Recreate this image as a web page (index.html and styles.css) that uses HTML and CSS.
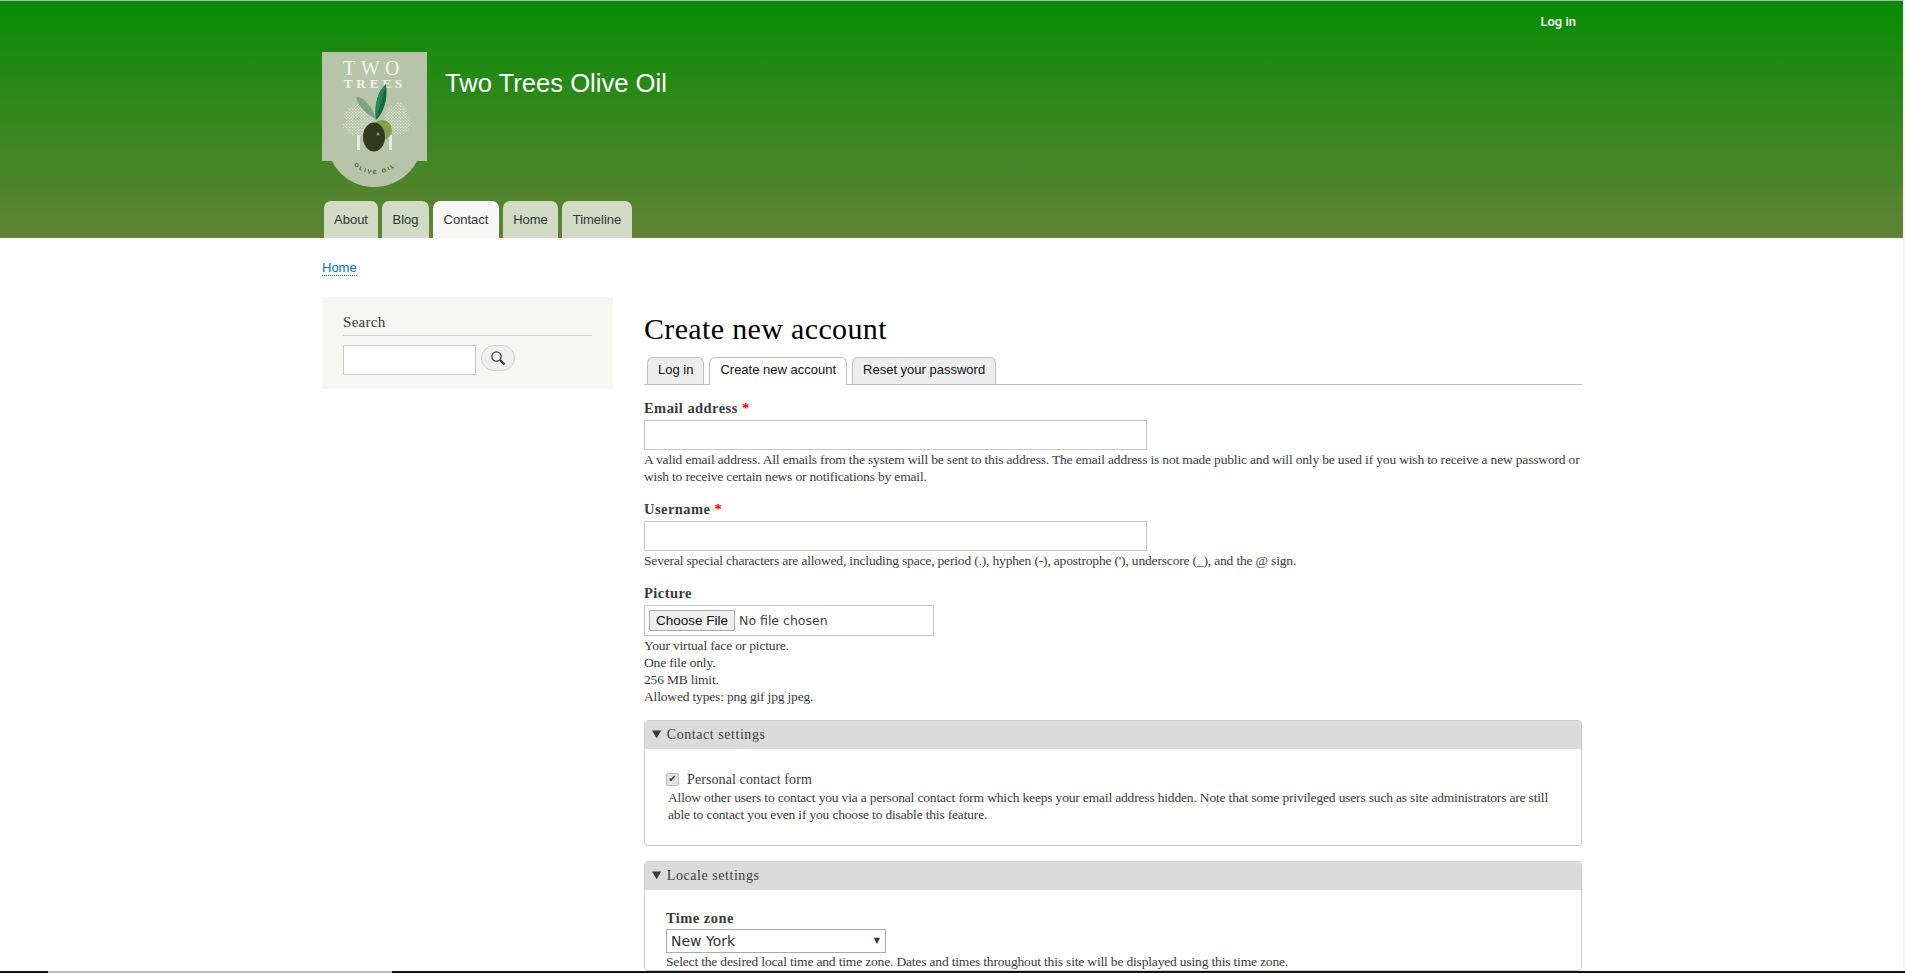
FILE: index.html
```html
<!DOCTYPE html>
<html lang="en">

<head>
    <meta charset="UTF-8">
    <meta name="viewport" content="width=device-width, initial-scale=1.0">
    <title>Create new account | Two Trees Olive Oil</title>
    <link rel="stylesheet" href="styles.css">
</head>

<body>
    <div class="page">
        <header class="site_header">
            <div class="wrap">
                <div class="secondary_menu"><a href="#">Log in</a></div>
                <div class="branding">
                    <a href="#" class="logo" aria-label="Home">
                        <svg width="105" height="135" viewBox="0 0 105 135">
                            <defs>
                                <pattern id="dots" width="3" height="3" patternUnits="userSpaceOnUse">
                                    <circle cx="0.7" cy="0.7" r="0.65" fill="#eceee4"/>
                                    <circle cx="2.2" cy="2.2" r="0.55" fill="#eceee4"/>
                                </pattern>
                            </defs>
                            <path d="M0 0H105V109H95C87 125 70 135 52 135C34 135 18 125 10 109H0Z" fill="#b8c4aa"/>
                            <text x="52" y="23" class="logo_two" text-anchor="middle">TWO</text>
                            <text x="53" y="36" class="logo_trees" text-anchor="middle">TREES</text>
                            <g class="logo_crown">
                                <path d="M34 51L41 53L46 59L53 64V84L38 85L27 83L20 74L23 68L22 61L27 55Z"/>
                                <path d="M62 60L70 53L78 50L85 56L86 64L90 72L86 80L76 84L62 82Z"/>
                            </g>
                            <rect x="35" y="83" width="3" height="15" fill="#e8eadf"/>
                            <rect x="67" y="83" width="3" height="15" fill="#e8eadf"/>
                            <path d="M34 45C41 44 50 54 54 67C45 63 36 54 34 45Z" fill="#7fa282"/>
                            <path d="M64 32C56 39 52 52 54 68C62 60 66 48 64 32Z" fill="#0f6b3c"/>
                            <path d="M64 32C56 39 52 52 54 68L60 46Z" fill="#2a8557"/>
                            <circle cx="60" cy="78" r="10" fill="#7fa04c"/>
                            <ellipse cx="52" cy="85" rx="11" ry="14.5" fill="#32391c"/>
                            <circle cx="56" cy="82" r="1.5" fill="#8b9180"/>
                            <path id="logo_curve" d="M24 106Q53 138 82 106" fill="none"/>
                            <text class="logo_oil"><textPath href="#logo_curve" startOffset="50%" text-anchor="middle">OLIVE OIL</textPath></text>
                        </svg>
                    </a>
                    <a href="#" class="site_name">Two Trees Olive Oil</a>
                </div>
                <nav class="primary_menu">
                    <a href="#" class="menu_about">About</a>
                    <a href="#" class="menu_blog">Blog</a>
                    <a href="#" class="menu_contact menu_checked">Contact</a>
                    <a href="#" class="menu_home">Home</a>
                    <a href="#" class="menu_timeline">Timeline</a>
                </nav>
            </div>
        </header>

        <div class="wrap">
            <div class="breadcrumb"><a href="#">Home</a></div>
            <div class="columns">
                <aside class="sidebar">
                    <section class="block">
                        <h2>Search</h2>
                        <form action="#" class="search_form">
                            <input type="search" aria-label="Search">
                            <button type="button" class="search_btn" aria-label="Search">
                                <svg width="16" height="16" viewBox="0 0 16 16" fill="none" stroke="#444">
                                    <circle cx="6.5" cy="6.5" r="4.6" stroke-width="1.4" fill="#f6f6f6"/>
                                    <path d="M10 10L14.5 14.5" stroke-width="2.4"/>
                                </svg>
                            </button>
                        </form>
                    </section>
                </aside>

                <main class="content">
                    <h1>Create new account</h1>
                    <ul class="tabs">
                        <li><a href="#">Log in</a></li>
                        <li class="tab_checked"><a href="#">Create new account</a></li>
                        <li><a href="#">Reset your password</a></li>
                    </ul>
                    <form action="#" class="account_form">
                        <div class="field">
                            <label for="mail">Email address <span class="required">*</span></label>
                            <input type="text" id="mail" class="text_input">
                            <div class="description">A valid email address. All emails from the system will be sent to this address. The email address is not made public and will only be used if you wish to receive a new password or wish to receive certain news or notifications by email.</div>
                        </div>
                        <div class="field">
                            <label for="user">Username <span class="required">*</span></label>
                            <input type="text" id="user" class="text_input">
                            <div class="description">Several special characters are allowed, including space, period (.), hyphen (-), apostrophe ('), underscore (_), and the @ sign.</div>
                        </div>
                        <div class="field">
                            <label for="picture">Picture</label>
                            <input type="file" id="picture" class="file_input">
                            <div class="description">Your virtual face or picture.<br>One file only.<br>256 MB limit.<br>Allowed types: png gif jpg jpeg.</div>
                        </div>
                        <details class="settings settings_contact" open>
                            <summary>Contact settings</summary>
                            <div class="settings_body">
                                <div class="check_row">
                                    <input type="checkbox" id="contact" checked>
                                    <label for="contact">Personal contact form</label>
                                </div>
                                <div class="description">Allow other users to contact you via a personal contact form which keeps your email address hidden. Note that some privileged users such as site administrators are still able to contact you even if you choose to disable this feature.</div>
                            </div>
                        </details>
                        <details class="settings" open>
                            <summary>Locale settings</summary>
                            <div class="settings_body settings_locale">
                                <label for="zone" class="zone_label">Time zone</label>
                                <div class="zone_box">
                                    <select id="zone" class="zone_select">
                                        <option>New York</option>
                                    </select>
                                </div>
                                <div class="description">Select the desired local time and time zone. Dates and times throughout this site will be displayed using this time zone.</div>
                            </div>
                        </details>
                    </form>
                </main>
            </div>
        </div>
    </div>
    <div class="bottom_strip"><span class="strip_gap"></span></div>
</body>

</html>
```

FILE: styles.css
```css
* {
    margin: 0;
    padding: 0;
    box-sizing: border-box;
}

html, body {
    height: 100%;
    overflow: hidden;
}

body {
    background-color: #f1f1f1;
    font: 13.5px/17px "Liberation Serif", serif;
    color: #3b3b3b;
}

a {
    text-decoration: none;
}

.page {
    width: 1903px;
    height: 973px;
    overflow: hidden;
    background-color: #fff;
}

.wrap {
    width: 1260px;
    margin-left: 322px;
}


/* header */

.site_header {
    height: 238px;
    border-top: 1px solid #b5b5b5;
    background: linear-gradient(#088c04, #628237);
}

.secondary_menu {
    height: 51px;
    padding: 12px 6px 0 0;
    text-align: right;
    font: 500 13px/17px "Roboto", "Liberation Sans", sans-serif;
}

.secondary_menu a {
    color: #fff;
}

.branding {
    display: flex;
    height: 149px;
}

.logo {
    display: block;
    width: 105px;
    height: 135px;
}

.logo_two {
    font: 20px "Liberation Serif", serif;
    letter-spacing: 5.5px;
    fill: #f2f3ea;
}

.logo_trees {
    font: bold 13px "Liberation Serif", serif;
    letter-spacing: 4px;
    fill: #f2f3ea;
}

.logo_crown {
    fill: url(#dots);
    stroke: #b8c4aa;
    stroke-width: 3;
    stroke-dasharray: 2 1.5;
}

.logo_oil {
    font: bold 5.5px "Liberation Sans", sans-serif;
    letter-spacing: 2.2px;
    fill: #3d5a28;
}

.site_name {
    margin: 15px 0 0 18px;
    font: 25.6px/32px "Liberation Sans", sans-serif;
    color: #fff;
}

.primary_menu {
    display: flex;
    gap: 4px;
    height: 37px;
    padding-left: 2px;
}

.primary_menu a {
    padding-top: 10px;
    text-align: center;
    font: 13px/17px "Liberation Sans", sans-serif;
    color: #333;
    background-color: #d1dbc6;
    border-radius: 7px 7px 0 0;
}

.primary_menu .menu_checked {
    background-color: #f7f8f5;
}

.menu_about {
    width: 54px;
}

.menu_blog {
    width: 47px;
}

.menu_contact {
    width: 66px;
}

.menu_home {
    width: 55px;
}

.menu_timeline {
    width: 70px;
}


/* body columns */

.breadcrumb {
    height: 59px;
    padding-top: 21px;
    font: 13px/17px "Liberation Sans", sans-serif;
}

.breadcrumb a {
    color: #0071b3;
    border-bottom: 1px dotted #0071b3;
}

.columns {
    display: flex;
    gap: 31px;
    align-items: flex-start;
}

.sidebar {
    width: 291px;
    flex-shrink: 0;
}

.block {
    height: 92px;
    padding: 17px 21px 0;
    background-color: #f6f6f2;
}

.block h2 {
    height: 22px;
    border-bottom: 1px solid #d6d6d6;
    font: 15px/17px "Liberation Serif", serif;
    font-weight: normal;
    letter-spacing: 0.3px;
}

.search_form {
    display: flex;
    gap: 5px;
    margin-top: 9px;
    align-items: flex-start;
}

.search_form input {
    width: 133px;
    height: 30px;
    border: 1px solid #c8c8c8;
    background-color: #fff;
}

.search_btn {
    display: flex;
    align-items: center;
    justify-content: center;
    width: 34px;
    height: 26px;
    border: 1px solid #d0d0d0;
    border-radius: 13px;
    background-color: #efefef;
}

.content {
    width: 938px;
}

h1 {
    height: 60px;
    padding-top: 14px;
    font: normal 30px/36px "Liberation Serif", serif;
    letter-spacing: 0.35px;
    color: #000;
}

.tabs {
    display: flex;
    gap: 5px;
    height: 28px;
    padding-left: 3px;
    border-bottom: 1px solid #bfbfbf;
    list-style: none;
}

.tabs li {
    height: 27px;
    padding: 3px 10px 0;
    border: 1px solid #bfbfbf;
    border-bottom: 0;
    border-radius: 6px 6px 0 0;
    background-color: #ededed;
    font: 13px/17px "Liberation Sans", sans-serif;
}

.tabs a {
    color: #111;
}

.tabs .tab_checked {
    height: 28px;
    background-color: #fff;
}


/* form */

.field {
    margin-top: 16px;
}

.account_form > .field:first-child {
    margin-top: 15px;
}

.field label, .zone_label {
    display: block;
    height: 20px;
    font: bold 14.5px/16px "Liberation Serif", serif;
    letter-spacing: 0.45px;
}

.required {
    color: #e00;
}

.text_input {
    display: block;
    width: 503px;
    height: 30px;
    border: 1px solid #c8c8c8;
}

.description {
    padding-top: 1px;
    font-size: 13.5px;
    line-height: 17px;
    letter-spacing: -0.17px;
}

.file_input {
    display: block;
    width: 290px;
    height: 31px;
    padding: 4px;
    border: 1px solid #c8c8c8;
    font: 12.5px "DejaVu Sans", sans-serif;
    color: #444;
}

.file_input::file-selector-button {
    height: 21px;
    margin-right: 4px;
    padding: 0 6px;
    border: 1px solid #aaa;
    border-radius: 0;
    background-color: #efefef;
    font: 13.5px "Liberation Sans", sans-serif;
    color: #111;
}

.settings {
    margin-top: 15px;
    border: 1px solid #ccc;
    border-radius: 4px;
}

.settings_contact {
    height: 126px;
}

.settings summary {
    height: 28px;
    padding-left: 7px;
    background-color: #dbdbdb;
    border-radius: 4px 4px 0 0;
    font-size: 14px;
    line-height: 28px;
    letter-spacing: 0.55px;
}

.settings_body {
    padding: 20px 21px 0;
}

.settings_contact .description {
    padding: 0 0 0 2px;
}

.settings_locale .description {
    padding-top: 0;
}

.check_row {
    display: flex;
    align-items: center;
    gap: 8px;
    height: 20px;
    font-size: 14px;
    letter-spacing: 0.1px;
}

.check_row input {
    appearance: none;
    display: flex;
    align-items: center;
    justify-content: center;
    width: 13px;
    height: 13px;
    border: 1px solid #bbb;
    border-radius: 2px;
    background-color: #e4e4e4;
}

.check_row input::before {
    content: "✔";
    font: 10px/10px "DejaVu Sans", sans-serif;
    color: #333;
}

.zone_label {
    height: 19px;
}

.zone_box {
    position: relative;
    width: 220px;
}

.zone_box::after {
    content: "▼";
    position: absolute;
    top: 7px;
    right: 6px;
    font: 8px/10px "DejaVu Sans", sans-serif;
    color: #333;
}

.zone_select {
    appearance: none;
    display: block;
    width: 220px;
    height: 24px;
    padding-left: 4px;
    border: 1px solid #aaa;
    border-radius: 0;
    background-color: #fff;
    font: 14px "DejaVu Sans", sans-serif;
    color: #333;
}

.bottom_strip {
    position: fixed;
    left: 0;
    right: 0;
    bottom: 0;
    height: 2px;
    background-color: #111;
}

.strip_gap {
    display: block;
    width: 344px;
    height: 2px;
    margin-left: 48px;
    background-color: #bdbdbd;
}
```
